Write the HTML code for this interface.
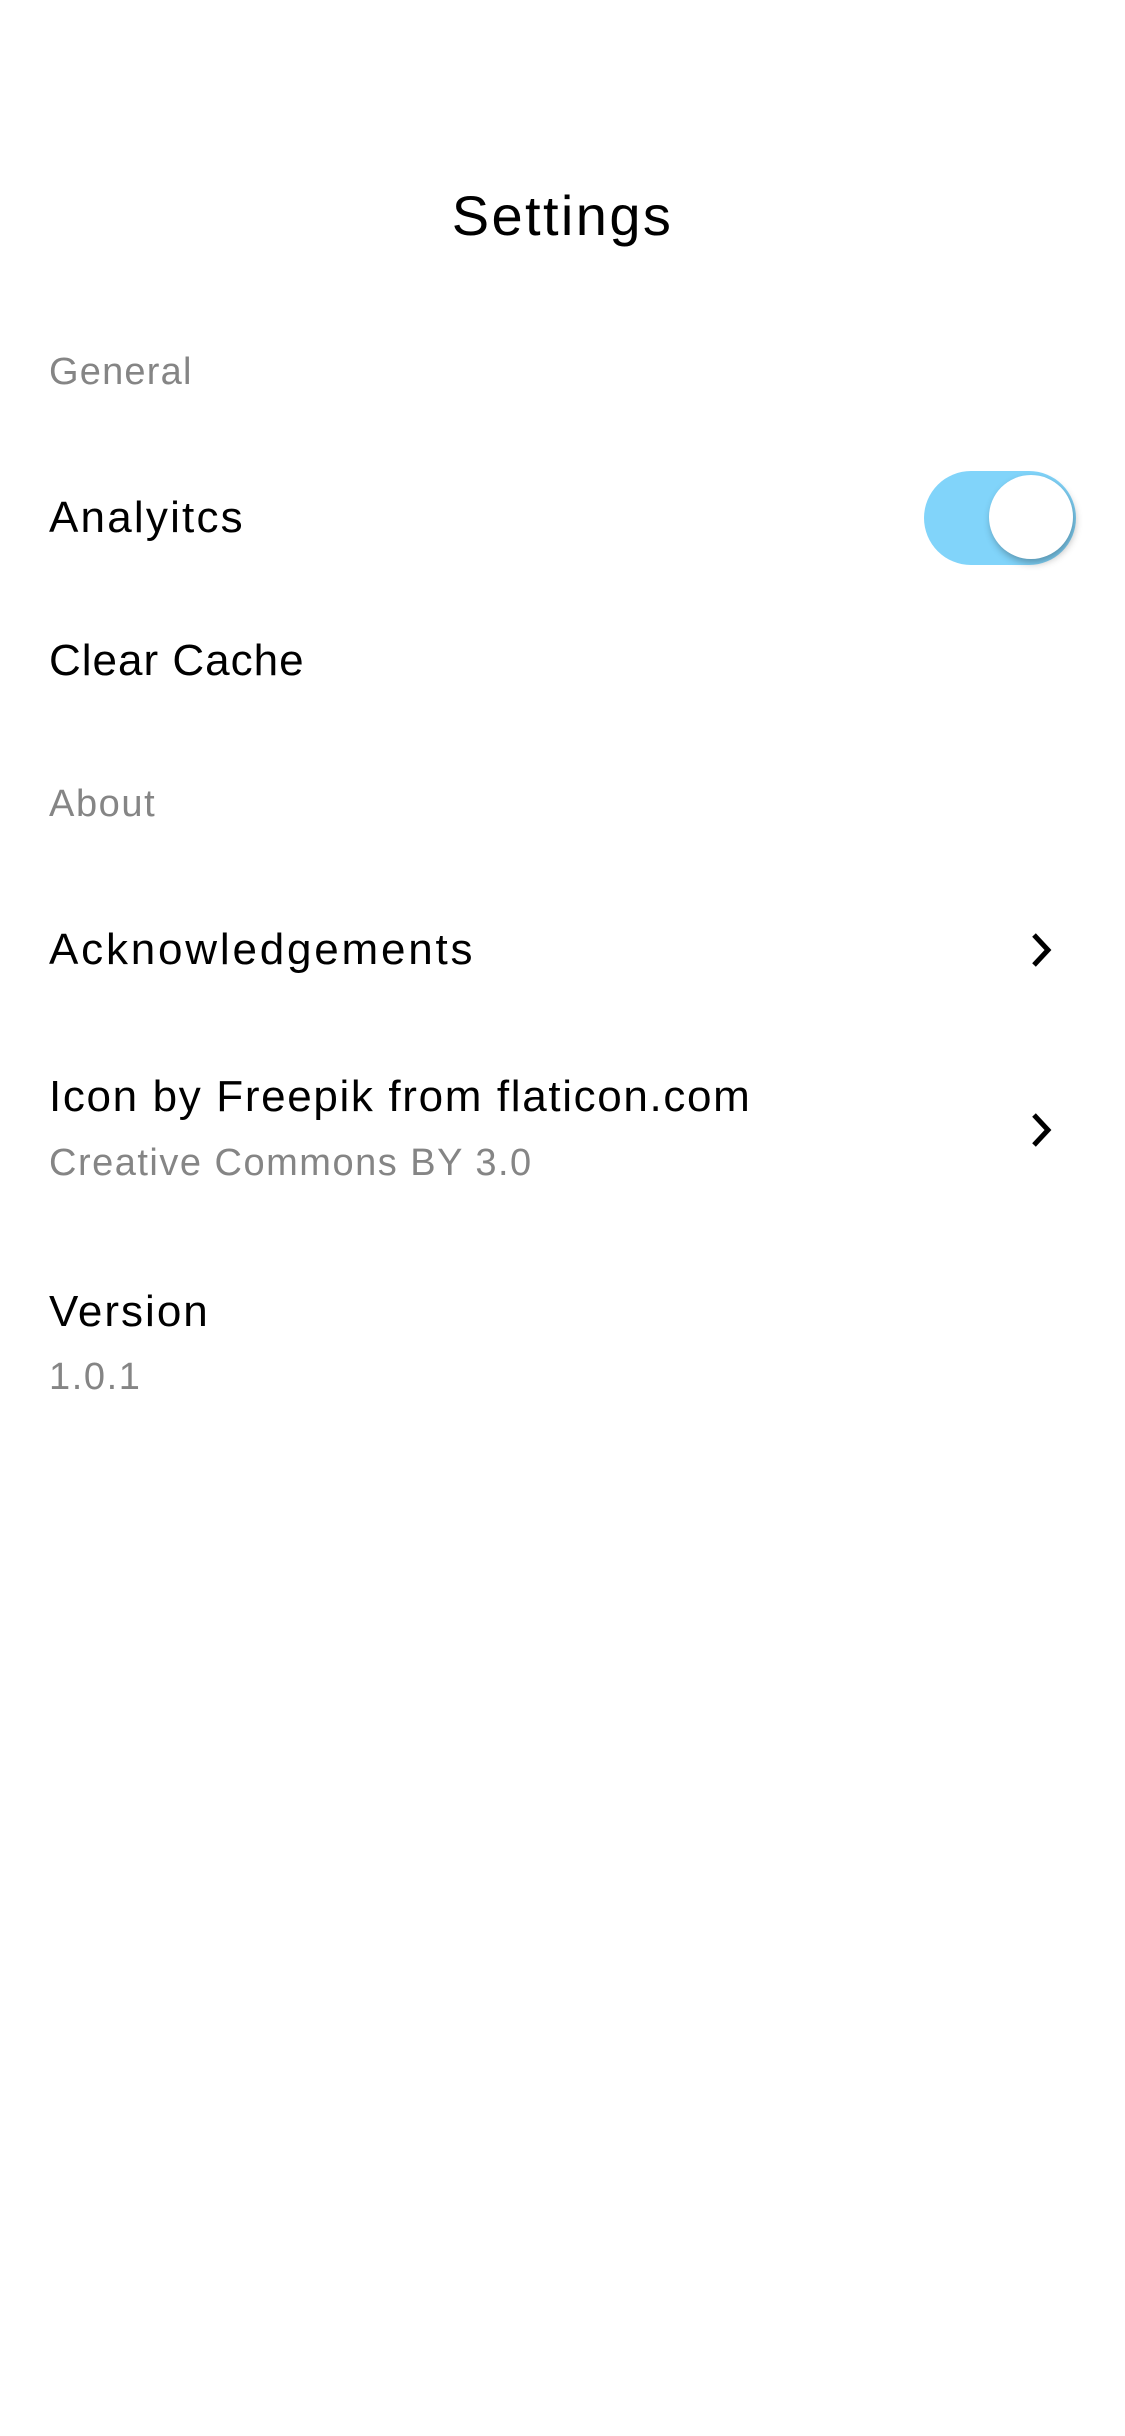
<!DOCTYPE html>
<html><head><meta charset="utf-8"><style>
html,body{margin:0;padding:0;background:#fff;}
body{width:1125px;height:2436px;position:relative;overflow:hidden;font-family:"Liberation Sans",sans-serif;}
.t{position:absolute;line-height:1;white-space:nowrap;}
.m{font-size:44px;color:#000;left:49px;letter-spacing:2.5px;}
.s{font-size:38px;color:#858585;left:49px;letter-spacing:1.6px;}
</style></head><body>
<div class="t" style="font-size:56px;left:0;width:1125px;text-align:center;top:188px;color:#000;letter-spacing:2.4px">Settings</div>
<div class="t s" style="top:353px;letter-spacing:1.2px">General</div>
<div class="t m" style="top:496px;letter-spacing:2.2px">Analyitcs</div>
<div style="position:absolute;left:924px;top:471px;width:152px;height:94px;border-radius:47px;background:#81d4fa"></div>
<div style="position:absolute;left:989px;top:475px;width:84px;height:84px;border-radius:50%;background:#fff;box-shadow:2px 4px 8px rgba(0,0,0,0.3)"></div>
<div class="t m" style="top:639px;letter-spacing:1.0px">Clear Cache</div>
<div class="t s" style="top:785px">About</div>
<div class="t m" style="top:928px;letter-spacing:2.8px">Acknowledgements</div>
<svg style="position:absolute;left:1025px;top:930px" width="34" height="40" viewBox="0 0 34 40"><path d="M9 5 L23 20 L9 35" fill="none" stroke="#000" stroke-width="5"/></svg>
<div class="t m" style="top:1075px;letter-spacing:1.65px">Icon by Freepik from flaticon.com</div>
<div class="t s" style="top:1144px;letter-spacing:1.5px">Creative Commons BY 3.0</div>
<svg style="position:absolute;left:1025px;top:1110px" width="34" height="40" viewBox="0 0 34 40"><path d="M9 5 L23 20 L9 35" fill="none" stroke="#000" stroke-width="5"/></svg>
<div class="t m" style="top:1290px;letter-spacing:2.0px">Version</div>
<div class="t s" style="top:1358px">1.0.1</div>
</body></html>
